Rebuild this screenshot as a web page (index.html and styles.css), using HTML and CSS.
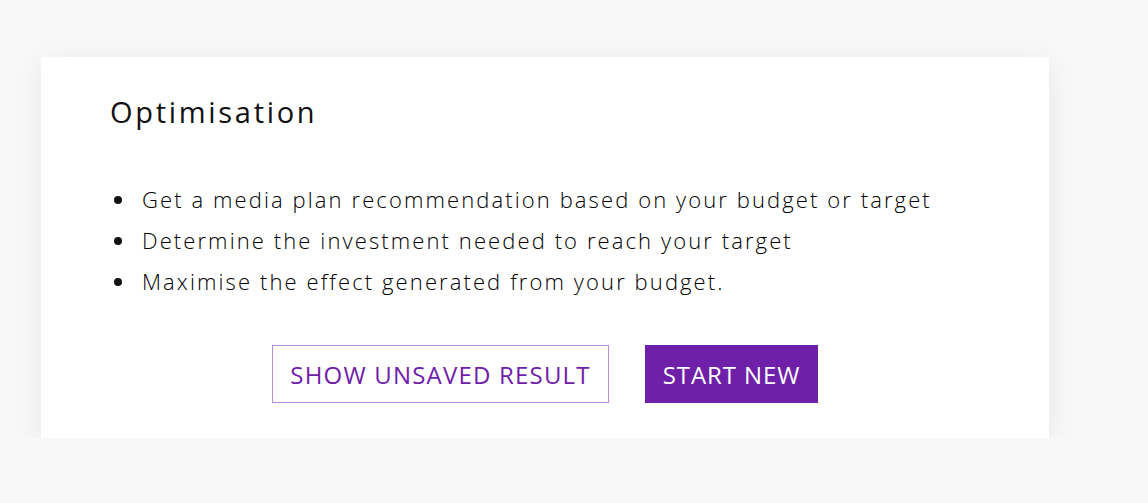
FILE: index.html
```html
<!DOCTYPE html>
<html lang="en">
<head>
<meta charset="utf-8">
<title>Optimisation</title>
<link rel="stylesheet" href="styles.css">
</head>
<body>
<main class="page">
  <section class="card">
    <h2 class="card-title">Optimisation</h2>
    <ul class="features">
      <li>Get a media plan recommendation based on your budget or target</li>
      <li>Determine the investment needed to reach your target</li>
      <li>Maximise the effect generated from your budget.</li>
    </ul>
    <div class="actions">
      <button class="btn btn-outline" type="button">SHOW UNSAVED RESULT</button>
      <button class="btn btn-solid" type="button">START NEW</button>
    </div>
  </section>
</main>
</body>
</html>
```

FILE: styles.css
```css
html, body {
  margin: 0;
  padding: 0;
  background: #f8f8f8;
}
body {
  font-family: "Open Sans", Lato, sans-serif;
  color: #111;
}
.page {
  padding: 57px 0 0 41px;
}
.card {
  width: 1008px;
  height: 381px;
  box-sizing: border-box;
  background: #fff;
  box-shadow: 0 6px 30px rgba(0, 0, 0, 0.07);
  padding: 37px 0 0 69px;
}
.card-title {
  margin: 0;
  font-size: 29px;
  font-weight: 400;
  letter-spacing: 2.7px;
  line-height: 36px;
}
.features {
  list-style: none;
  margin: 49px 0 0 0;
  padding: 0 0 0 4px;
  font-size: 22px;
  font-weight: 300;
  color: #000;
  line-height: 41px;
  letter-spacing: 2.1px;
}
.features li {
  display: flex;
  align-items: center;
}
.features li::before {
  content: "";
  flex: none;
  width: 8px;
  height: 8px;
  border-radius: 50%;
  background: #111;
  margin-right: 20px;
}
.actions {
  display: flex;
  justify-content: center;
  gap: 36px;
  margin: 43px 0 0 -69px;
}
.btn {
  font-family: inherit;
  font-size: 24px;
  height: 58px;
  padding: 0;
  letter-spacing: 1.2px;
  white-space: nowrap;
  cursor: pointer;
  border-radius: 0;
}
.btn-outline {
  width: 337px;
  background: #fff;
  color: #6f20a8;
  border: 1px solid #b98ade;
}
.btn-solid {
  width: 173px;
  background: #6f20a8;
  color: #fff;
  border: 1px solid #6f20a8;
  letter-spacing: 0.9px;
}
```
